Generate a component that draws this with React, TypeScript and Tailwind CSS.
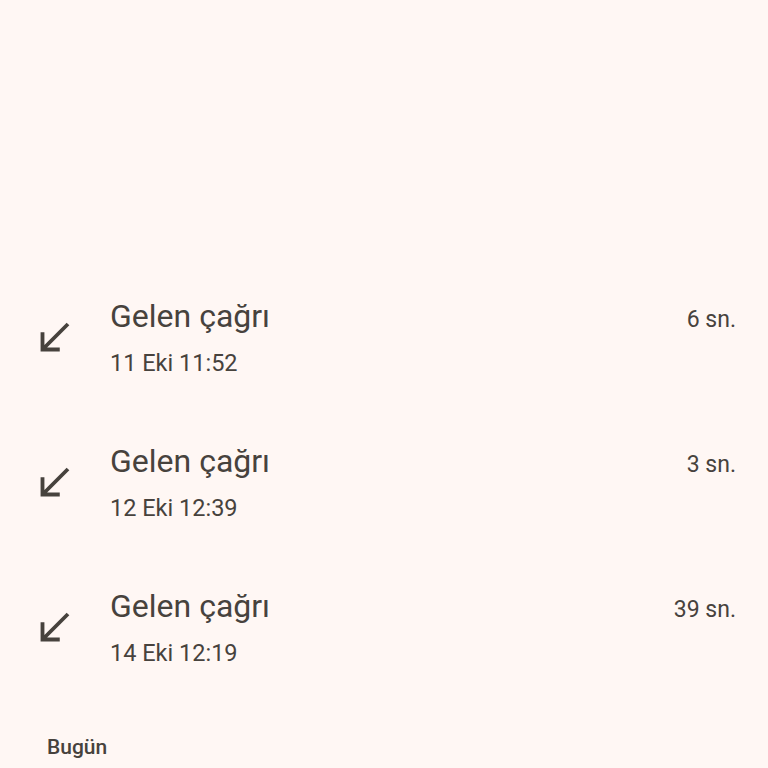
const calls = [
  { title: "Gelen çağrı", date: "11 Eki 11:52", duration: "6 sn." },
  { title: "Gelen çağrı", date: "12 Eki 12:39", duration: "3 sn." },
  { title: "Gelen çağrı", date: "14 Eki 12:19", duration: "39 sn." },
];

function CallReceivedIcon() {
  return (
    <svg width="46" height="46" viewBox="0 0 24 24" fill="#47423d">
      <path d="M20 5.41L18.59 4 7 15.59V9H5v10h10v-2H8.41z" />
    </svg>
  );
}

function CallRow({ title, date, duration }: { title: string; date: string; duration: string }) {
  return (
    <div className="flex h-[145px] items-center">
      <div className="w-[110px] shrink-0 pl-[31px]">
        <CallReceivedIcon />
      </div>
      <div className="flex-1 pr-8">
        <div className="flex items-baseline justify-between">
          <span className="text-[32px] leading-[44px]">{title}</span>
          <span className="text-[23px] leading-[44px]">{duration}</span>
        </div>
        <div className="mt-[3px] text-[23.5px] leading-[36px]">{date}</div>
      </div>
    </div>
  );
}

export default function App() {
  return (
    <div
      className="h-[768px] w-[768px] overflow-hidden bg-[#fff7f4] pt-[265px] text-[#47423d]"
      style={{ fontFamily: "Roboto, 'Noto Sans', sans-serif" }}
    >
      {calls.map((c, i) => (
        <CallRow key={i} {...c} />
      ))}
      <div className="mt-[33px] pl-[47px] text-[21px] font-medium leading-[28px]">Bugün</div>
    </div>
  );
}
